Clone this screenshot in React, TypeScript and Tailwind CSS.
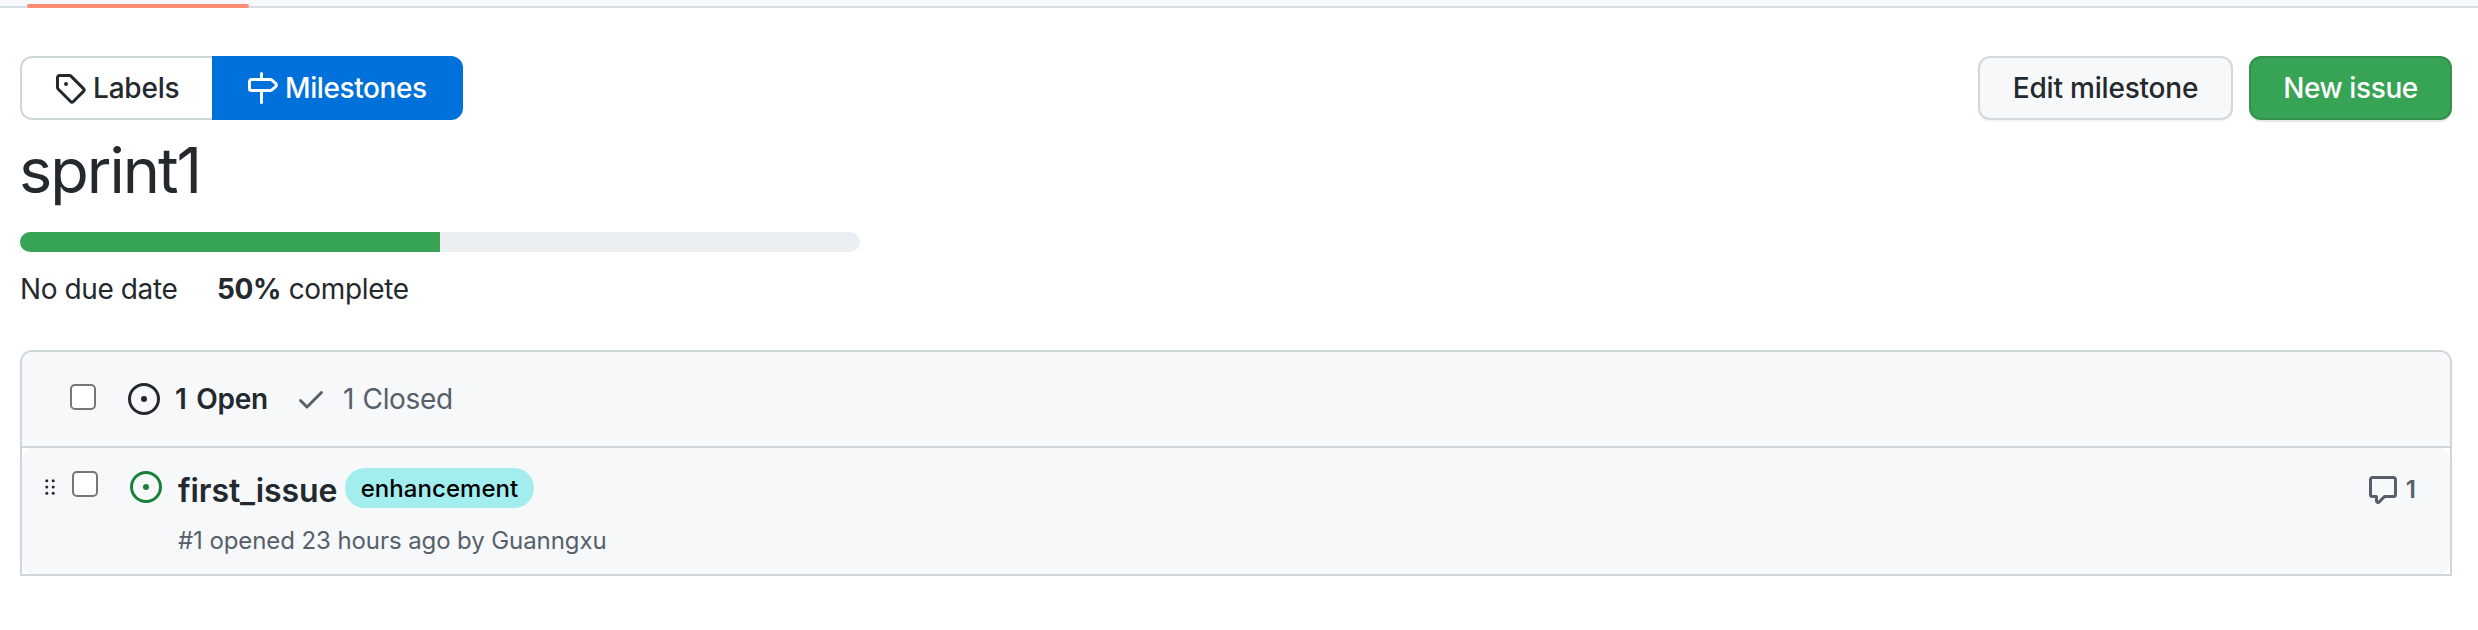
import type { ReactNode } from "react";

const paths = {
  tag: "M2.5 7.775V2.75a.25.25 0 01.25-.25h5.025a.25.25 0 01.177.073l6.25 6.25a.25.25 0 010 .354l-5.025 5.025a.25.25 0 01-.354 0l-6.25-6.25a.25.25 0 01-.073-.177zm-1.5 0V2.75C1 1.784 1.784 1 2.75 1h5.025c.464 0 .91.184 1.238.513l6.25 6.25a1.75 1.75 0 010 2.474l-5.026 5.026a1.75 1.75 0 01-2.474 0l-6.25-6.25A1.75 1.75 0 011 7.775zM6 5a1 1 0 100 2 1 1 0 000-2z",
  milestone:
    "M7.75 0a.75.75 0 01.75.75V3h3.634c.414 0 .814.147 1.13.414l2.07 1.75a1.75 1.75 0 010 2.672l-2.07 1.75a1.75 1.75 0 01-1.13.414H8.5v5.25a.75.75 0 11-1.5 0V10H2.75A1.75 1.75 0 011 8.25v-3.5C1 3.784 1.784 3 2.75 3H7V.75A.75.75 0 017.75 0zm0 8.5h4.384a.25.25 0 00.161-.06l2.07-1.75a.25.25 0 000-.38l-2.07-1.75a.25.25 0 00-.161-.06H2.75a.25.25 0 00-.25.25v3.5c0 .138.112.25.25.25h5z",
  open: "M8 9.5a1.5 1.5 0 100-3 1.5 1.5 0 000 3zM8 0a8 8 0 100 16A8 8 0 008 0zM1.5 8a6.5 6.5 0 1113 0 6.5 6.5 0 01-13 0z",
  check:
    "M13.78 4.22a.75.75 0 010 1.06l-7.25 7.25a.75.75 0 01-1.06 0L2.22 9.28a.75.75 0 011.06-1.06L6 10.94l6.72-6.72a.75.75 0 011.06 0z",
  comment:
    "M2.75 2.5a.25.25 0 00-.25.25v7.5c0 .138.112.25.25.25h2a.75.75 0 01.75.75v2.19l2.72-2.72a.75.75 0 01.53-.22h4.5a.25.25 0 00.25-.25v-7.5a.25.25 0 00-.25-.25H2.75zM1 2.75C1 1.784 1.784 1 2.75 1h10.5c.966 0 1.75.784 1.75 1.75v7.5A1.75 1.75 0 0113.25 12H9.06l-2.573 2.573A1.457 1.457 0 014 13.543V12H2.75A1.75 1.75 0 011 10.25v-7.5z",
};

function Icon({ name, className = "" }: { name: keyof typeof paths; className?: string }) {
  return (
    <svg viewBox="0 0 16 16" className={`size-8 shrink-0 ${className}`} fill="currentColor" fillRule="evenodd">
      <path d={paths[name]} />
    </svg>
  );
}

function Checkbox({ className = "" }: { className?: string }) {
  return (
    <input
      type="checkbox"
      className={`size-[26px] shrink-0 appearance-none rounded-[5px] border-2 border-[#767676] bg-white ${className}`}
    />
  );
}

function Grabber() {
  return (
    <svg viewBox="0 0 10 16" className="mt-[31px] ml-[23px] h-4 w-[10px] shrink-0" fill="#24292f">
      {[1.7, 8, 14.3].map((y) => (
        <g key={y}>
          <circle cx="1.8" cy={y} r="1.5" />
          <circle cx="8.2" cy={y} r="1.5" />
        </g>
      ))}
    </svg>
  );
}

function Button({ className, children }: { className: string; children: ReactNode }) {
  return (
    <button
      className={`flex h-16 items-center justify-center rounded-xl border-2 text-[28px] leading-10 font-[550] whitespace-nowrap ${className}`}
    >
      {children}
    </button>
  );
}

export default function App() {
  return (
    <div className="min-h-[630px] bg-white font-['Inter','Liberation_Sans',sans-serif] text-[#24292e]">
      <div className="flex h-2 items-end border-b-2 border-[#d8dee2] bg-[#f6f8fa] pl-[27px]">
        <div className="-mb-0.5 h-1 w-[222px] rounded-[2px] bg-[#fd8c73]" />
      </div>

      <main className="pt-12 pr-[26px] pl-5">
        <div className="flex h-16 items-center">
          <a className="flex h-16 w-48 items-center rounded-l-xl border-2 border-r-0 border-[#ced7dc] pl-8 text-[28px] font-[550]">
            <Icon name="tag" />
            <span className="ml-[7px] tracking-[-0.2px]">Labels</span>
          </a>
          <a className="flex h-16 w-[251px] items-center rounded-r-xl bg-[#0070db] pl-[34px] text-[28px] font-[550] text-white">
            <Icon name="milestone" />
            <span className="ml-[7px] tracking-[-0.4px]">Milestones</span>
          </a>
          <div className="ml-auto flex gap-4">
            <Button className="w-[255px] border-[#d3d8dc] bg-[#f6f8fa] tracking-[-0.2px] shadow-[0_2px_0_rgba(27,31,36,0.04)]">
              Edit milestone
            </Button>
            <Button className="w-[203px] border-[#32914b] bg-[#37a354] tracking-[-0.4px] text-white shadow-[0_2px_0_rgba(27,31,36,0.1)]">
              New issue
            </Button>
          </div>
        </div>

        <h1 className="mt-[2px] -ml-px h-[95px] text-[63px] leading-[96px] font-[430] tracking-[-2px]">sprint1</h1>

        <div className="mt-[15px] h-5 w-[840px] overflow-hidden rounded-[12px] bg-[#ebeff1]">
          <div className="h-full w-1/2 bg-[#37a354]" />
        </div>

        <div className="mt-[17px] flex h-10 text-[28px] leading-10">
          <span className="w-[197px] tracking-[-0.4px]">No due date</span>
          <span className="tracking-[-0.35px]">
            <b className="font-[650]">50%</b> complete
          </span>
        </div>

        <section className="mt-[41px] rounded-t-xl border-2 border-[#ced7dc]">
          <header className="flex h-24 items-start rounded-t-[10px] border-b-2 border-[#ced7dc] bg-[#f6f8fa] text-[28px] leading-10">
            <Checkbox className="mt-8 ml-12" />
            <Icon name="open" className="mt-[31px] ml-8" />
            <span className="mt-[27px] ml-[15px] w-[120px] font-[640] tracking-[-0.3px] [word-spacing:3px]">1 Open</span>
            <Icon name="check" className="mt-[31px] text-[#57606a]" />
            <span className="mt-[27px] ml-4 tracking-[-0.35px] text-[#57606a] [word-spacing:1px]">1 Closed</span>
          </header>

          <article className="flex h-[126px] items-start rounded-xl bg-[#f6f8fa]">
            <Grabber />
            <Checkbox className="mt-[23px] ml-[17px]" />
            <Icon name="open" className="mt-[23px] ml-8 text-[#1a7f37]" />
            <div className="ml-4">
              <div className="flex h-[68px] items-start">
                <a className="mt-[22px] w-[167px] text-[32px] leading-[42px] font-[640] tracking-[-0.1px]">
                  first_issue
                </a>
                <span className="mt-5 flex h-10 w-[189px] items-center justify-center rounded-full bg-[#a2eeef] pt-px text-[24px] font-[540] tracking-[0.05px] text-black">
                  enhancement
                </span>
              </div>
              <p className="mt-[7px] text-[24px] leading-9 tracking-[-0.09px] whitespace-nowrap text-[#57606a]">
                #1 opened 23 hours ago by Guanngxu
              </p>
            </div>
            <div className="mt-[26px] mr-[34px] ml-auto flex h-8 items-center text-[24px] font-semibold text-[#57606a]">
              <Icon name="comment" />
              <span className="ml-[7px]">1</span>
            </div>
          </article>
        </section>
      </main>
    </div>
  );
}
